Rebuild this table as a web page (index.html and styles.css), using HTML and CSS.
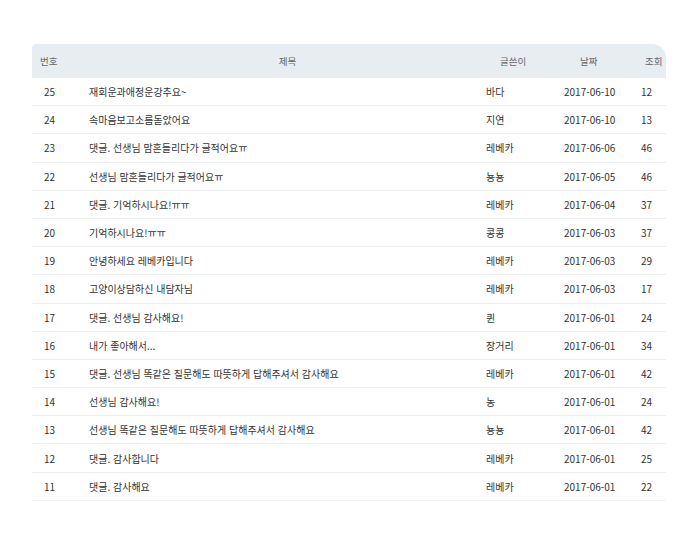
FILE: index.html
```html
<!DOCTYPE html>
<html lang="ko">
<head>
  <meta charset="UTF-8">
  <title>게시판</title>
  <link rel="stylesheet" href="styles.css">
</head>
<body>
  <div class="board">
    <div class="row head">
      <div class="c-no">번호</div>
      <div class="c-title">제목</div>
      <div class="c-writer">글쓴이</div>
      <div class="c-date">날짜</div>
      <div class="c-hit">조회</div>
    </div>
    <div class="row"><div class="c-no">25</div><div class="c-title">재회운과애정운강추요~</div><div class="c-writer">바다</div><div class="c-date">2017-06-10</div><div class="c-hit">12</div></div>
    <div class="row"><div class="c-no">24</div><div class="c-title">속마음보고소름돋았어요</div><div class="c-writer">지연</div><div class="c-date">2017-06-10</div><div class="c-hit">13</div></div>
    <div class="row"><div class="c-no">23</div><div class="c-title">댓글. 선생님 맘혼들리다가 글적어요ㅠ</div><div class="c-writer">레베카</div><div class="c-date">2017-06-06</div><div class="c-hit">46</div></div>
    <div class="row"><div class="c-no">22</div><div class="c-title">선생님 맘혼들리다가 글적어요ㅠ</div><div class="c-writer">뇽뇽</div><div class="c-date">2017-06-05</div><div class="c-hit">46</div></div>
    <div class="row"><div class="c-no">21</div><div class="c-title">댓글. 기억하시나요!ㅠㅠ</div><div class="c-writer">레베카</div><div class="c-date">2017-06-04</div><div class="c-hit">37</div></div>
    <div class="row"><div class="c-no">20</div><div class="c-title">기억하시나요!ㅠㅠ</div><div class="c-writer">콩콩</div><div class="c-date">2017-06-03</div><div class="c-hit">37</div></div>
    <div class="row"><div class="c-no">19</div><div class="c-title">안녕하세요 레베카입니다</div><div class="c-writer">레베카</div><div class="c-date">2017-06-03</div><div class="c-hit">29</div></div>
    <div class="row"><div class="c-no">18</div><div class="c-title">고양이상담하신 내담자님</div><div class="c-writer">레베카</div><div class="c-date">2017-06-03</div><div class="c-hit">17</div></div>
    <div class="row"><div class="c-no">17</div><div class="c-title">댓글. 선생님 감사해요!</div><div class="c-writer">퀸</div><div class="c-date">2017-06-01</div><div class="c-hit">24</div></div>
    <div class="row"><div class="c-no">16</div><div class="c-title">내가 좋아해서...</div><div class="c-writer">장거리</div><div class="c-date">2017-06-01</div><div class="c-hit">34</div></div>
    <div class="row"><div class="c-no">15</div><div class="c-title">댓글. 선생님 똑같은 질문해도 따뜻하게 답해주셔서 감사해요</div><div class="c-writer">레베카</div><div class="c-date">2017-06-01</div><div class="c-hit">42</div></div>
    <div class="row"><div class="c-no">14</div><div class="c-title">선생님 감사해요!</div><div class="c-writer">농</div><div class="c-date">2017-06-01</div><div class="c-hit">24</div></div>
    <div class="row"><div class="c-no">13</div><div class="c-title">선생님 똑같은 질문해도 따뜻하게 답해주셔서 감사해요</div><div class="c-writer">뇽뇽</div><div class="c-date">2017-06-01</div><div class="c-hit">42</div></div>
    <div class="row"><div class="c-no">12</div><div class="c-title">댓글. 감사합니다</div><div class="c-writer">레베카</div><div class="c-date">2017-06-01</div><div class="c-hit">25</div></div>
    <div class="row last"><div class="c-no">11</div><div class="c-title">댓글. 감사해요</div><div class="c-writer">레베카</div><div class="c-date">2017-06-01</div><div class="c-hit">22</div></div>
  </div>
</body>
</html>
```

FILE: styles.css
```css
* { margin: 0; padding: 0; box-sizing: border-box; }
body {
  background: #fff;
  font-family: "Noto Sans CJK KR", "Noto Sans", sans-serif;
  color: #333;
  font-size: 10px;
}
.board {
  margin: 44px 0 0 32px;
  width: 634px;
  overflow: hidden;
  border-radius: 4px 14px 0 0;
}
.row {
  display: grid;
  grid-template-columns: 57px 397px 78px 77px 25px;
  height: 28.2px;
  align-items: center;
  border-bottom: 1px solid #eceef0;
  white-space: nowrap;
}
.row.last {
  border-bottom-color: #f2f3f4;
}
.c-no { padding-left: 12px; }
.head {
  height: 34px;
  background: #e8edf1;
  border-bottom: none;
  color: #666;
  font-size: 9.5px;
}
.head .c-no { padding-left: 8px; }
.head .c-title { text-align: center; }
.head .c-writer { padding-left: 14px; }
.head .c-date { padding-left: 16px; }
.head .c-hit { padding-left: 4px; }
```
